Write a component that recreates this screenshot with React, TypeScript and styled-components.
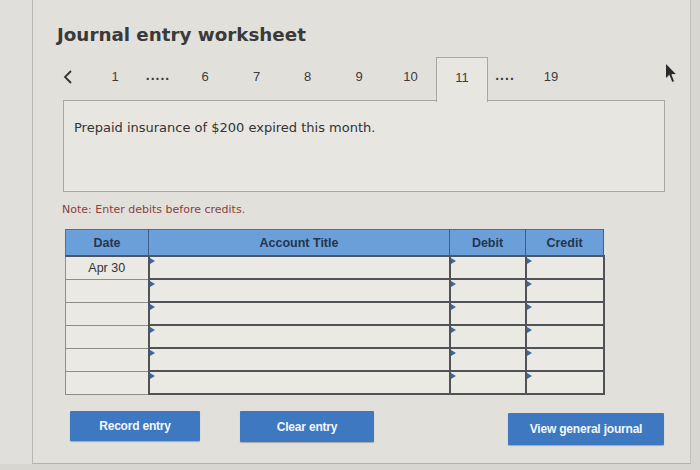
import styled, { createGlobalStyle } from "styled-components";

const GlobalStyle = createGlobalStyle`
  html, body {
    margin: 0;
    padding: 0;
    background: #d8d6d1;
  }
  body {
    width: 700px;
    height: 470px;
    overflow: hidden;
    font-family: "DejaVu Sans", Verdana, sans-serif;
  }
`;

const tabs = [
  { label: "1", width: 44 },
  { label: ".....", width: 42, dots: true },
  { label: "6", width: 52 },
  { label: "7", width: 51 },
  { label: "8", width: 51 },
  { label: "9", width: 52 },
  { label: "10", width: 51 },
  { label: "11", width: 52, active: true },
  { label: "....", width: 34, dots: true },
  { label: "19", width: 58 },
];

const rows = ["Apr 30", "", "", "", "", ""];

function Cursor() {
  return (
    <CursorMark width="14" height="24" viewBox="0 0 14 24">
      <path
        d="M1.5 1 L1.5 17 L5.2 13.4 L8 20.5 L10.6 19.4 L7.9 12.6 L12.8 12.6 Z"
        fill="#2a2a2a"
        stroke="#e8e8e8"
        strokeWidth="0.9"
      />
    </CursorMark>
  );
}

export default function App() {
  return (
    <>
      <GlobalStyle />
      <Page>
        <LeftStrip />
        <Panel>
          <Title>Journal entry worksheet</Title>
          <TabRow>
            <PrevTab>
              <svg width="10" height="16" viewBox="0 0 10 16">
                <path d="M8 2 L2 8 L8 14" fill="none" stroke="#333" strokeWidth="1.8" />
              </svg>
            </PrevTab>
            {tabs.map((t, i) => (
              <Tab key={i} $width={t.width} $active={!!t.active} $dots={!!t.dots}>
                {t.label}
              </Tab>
            ))}
          </TabRow>
          <QuestionBox>
            <QuestionText>Prepaid insurance of $200 expired this month.</QuestionText>
          </QuestionBox>
          <Note>Note: Enter debits before credits.</Note>
          <EntryTable>
            <colgroup>
              <col style={{ width: 83 }} />
              <col style={{ width: 301 }} />
              <col style={{ width: 76 }} />
              <col style={{ width: 78 }} />
            </colgroup>
            <thead>
              <tr>
                <HeadCell>Date</HeadCell>
                <HeadCell>Account Title</HeadCell>
                <HeadCell>Debit</HeadCell>
                <HeadCell>Credit</HeadCell>
              </tr>
            </thead>
            <tbody>
              {rows.map((d, i) => (
                <tr key={i}>
                  <DateCell>{d}</DateCell>
                  <InputCell />
                  <InputCell />
                  <InputCell />
                </tr>
              ))}
            </tbody>
          </EntryTable>
          <ButtonRow>
            <ActionButton $width={130} $height={30}>Record entry</ActionButton>
            <ActionButton $width={134} $height={31}>Clear entry</ActionButton>
            <ActionButton $width={156} $height={32} $push>
              View general journal
            </ActionButton>
          </ButtonRow>
          <Cursor />
        </Panel>
      </Page>
    </>
  );
}

const Page = styled.div`
  display: flex;
  width: 700px;
  height: 470px;
`;

const LeftStrip = styled.div`
  width: 32px;
  height: 464px;
  background: #e0dfdb;
  border-right: 1px solid #b9b7b2;
`;

const Panel = styled.div`
  position: relative;
  width: 658px;
  height: 464px;
  background: #e2e0db;
  border-right: 1px solid #c2c0bb;
  border-bottom: 1px solid #b5b3ae;
  box-sizing: border-box;
  padding: 23px 0 0 24px;
  display: flex;
  flex-direction: column;
`;

const Title = styled.h1`
  margin: 0;
  font-family: "DejaVu Sans", Verdana, sans-serif;
  font-weight: bold;
  font-size: 18.3px;
  line-height: 24px;
  color: #3a3a3a;
`;

const TabRow = styled.div`
  display: flex;
  align-items: stretch;
  height: 43px;
  margin: 10px 0 0 6px;
  position: relative;
  z-index: 1;
`;

const PrevTab = styled.div`
  width: 30px;
  display: flex;
  align-items: center;
  padding-bottom: 3px;
  box-sizing: border-box;
`;

const Tab = styled.div<{ $width: number; $active: boolean; $dots: boolean }>`
  width: ${(p) => p.$width}px;
  box-sizing: border-box;
  display: flex;
  justify-content: center;
  padding-top: ${(p) => (p.$dots ? "10px" : "12px")};
  font-family: "Liberation Sans", Arial, sans-serif;
  font-size: ${(p) => (p.$dots ? "14px" : "13px")};
  font-weight: ${(p) => (p.$dots ? "bold" : "normal")};
  letter-spacing: ${(p) => (p.$dots ? "1px" : "0")};
  color: #3b3b3b;
  background: ${(p) => (p.$active ? "#e8e6e1" : "transparent")};
  border: ${(p) => (p.$active ? "1px solid #a9a7a2" : "none")};
  border-bottom: none;
  margin-bottom: ${(p) => (p.$active ? "-2px" : "0")};
`;

const QuestionBox = styled.div`
  width: 602px;
  height: 92px;
  margin-left: 6px;
  box-sizing: border-box;
  border: 1px solid #a9a7a2;
  background: #e8e6e1;
  padding: 19px 0 0 10px;
`;

const QuestionText = styled.p`
  margin: 0;
  font-size: 13px;
  color: #333;
`;

const Note = styled.p`
  margin: 11px 0 0 5px;
  font-size: 11px;
  color: #8a4040;
`;

const EntryTable = styled.table`
  margin: 13px 0 0 8px;
  width: 538px;
  border-collapse: collapse;
  table-layout: fixed;
  border: 1px solid #6b6b6b;
`;

const HeadCell = styled.th`
  height: 25px;
  padding: 0;
  background: #6b9fd9;
  color: #27354e;
  font-family: "Liberation Sans", Arial, sans-serif;
  font-size: 12.5px;
  font-weight: bold;
  text-align: center;
  border-right: 1px solid #3f5f88;
  border-bottom: 2px solid #4d5560;
`;

const DateCell = styled.td`
  height: 21px;
  padding: 0;
  background: #ebe9e4;
  border: 1px solid #8e8d8a;
  font-family: "Liberation Sans", Arial, sans-serif;
  font-size: 12.5px;
  color: #333;
  text-align: center;
`;

const InputCell = styled.td`
  position: relative;
  height: 21px;
  padding: 0;
  background: #ebe9e4;
  border: 2px solid #4f5257;

  &::before {
    content: "";
    position: absolute;
    left: 0;
    top: 1px;
    border-top: 3px solid transparent;
    border-bottom: 3px solid transparent;
    border-left: 5px solid #3d67a3;
  }
`;

const ButtonRow = styled.div`
  display: flex;
  align-items: flex-start;
  gap: 40px;
  width: 594px;
  margin: 16px 0 0 13px;
`;

const ActionButton = styled.button<{ $width: number; $height: number; $push?: boolean }>`
  width: ${(p) => p.$width}px;
  height: ${(p) => p.$height}px;
  margin-left: ${(p) => (p.$push ? "auto" : "0")};
  margin-top: ${(p) => (p.$push ? "2px" : "0")};
  border: none;
  border-radius: 1px;
  background: #3e78c1;
  color: #f4f6fa;
  font-family: "Liberation Sans", Arial, sans-serif;
  font-size: 12px;
  font-weight: bold;
  letter-spacing: -0.2px;
  box-shadow: 0 1px 1px rgba(0, 0, 0, 0.25);
`;

const CursorMark = styled.svg`
  position: absolute;
  left: 631px;
  top: 62px;
`;
